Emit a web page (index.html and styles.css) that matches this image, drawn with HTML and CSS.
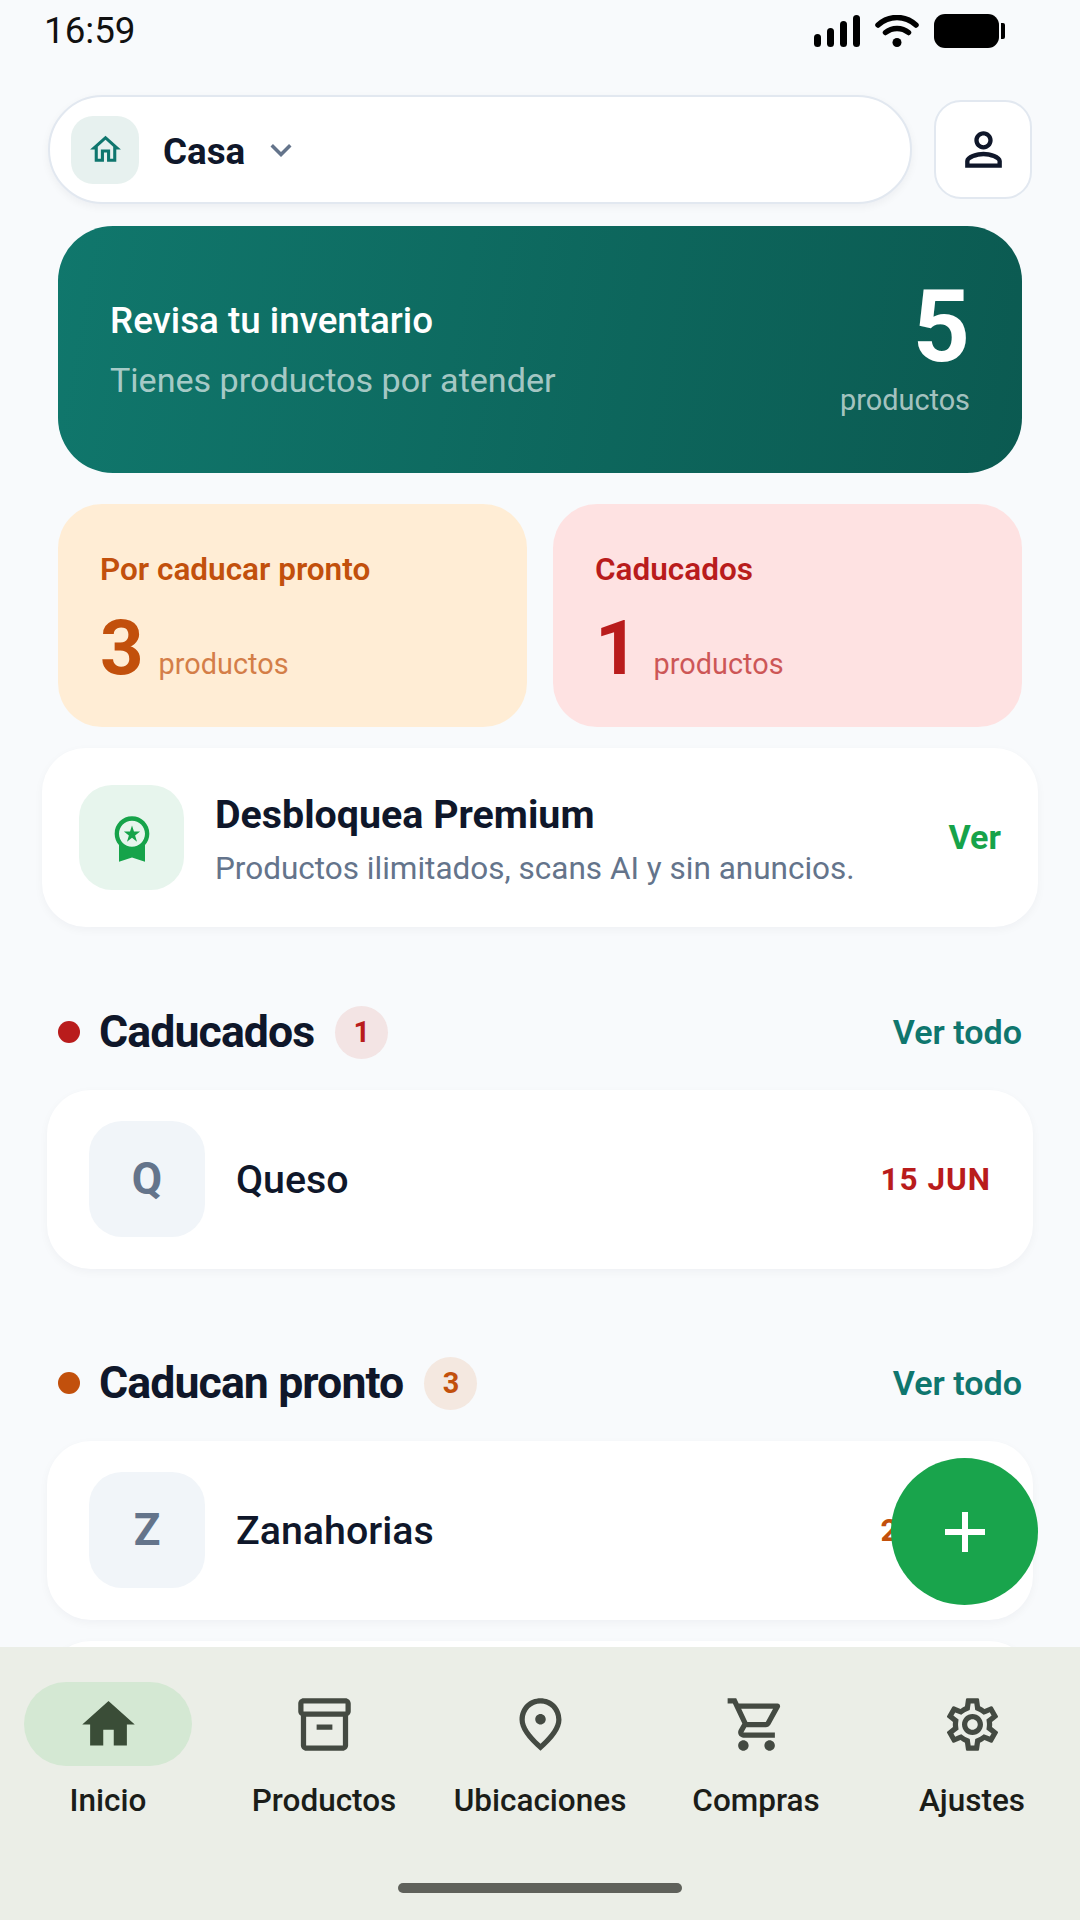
FILE: index.html
```html
<!DOCTYPE html>
<html lang="es">
<head>
<meta charset="UTF-8">
<meta name="viewport" content="width=device-width, initial-scale=1.0">
<title>Inicio</title>
<link rel="stylesheet" href="styles.css">
</head>
<body>
<div class="screen">
    <main class="content">
        <div class="status-bar">
            <span class="clock">16:59</span>
            <div class="status-icons">
                <svg class="signal" width="46" height="32" viewBox="0 0 46 32"><rect x="0" y="19" width="7" height="13" rx="3.5"/><rect x="13" y="13" width="7" height="19" rx="3.5"/><rect x="26" y="6" width="7" height="26" rx="3.5"/><rect x="39" y="0" width="7" height="32" rx="3.5"/></svg>
                <svg class="wifi" width="44" height="32" viewBox="0 0 44 32" fill="none" stroke="#000" stroke-width="5.5" stroke-linecap="round"><path d="M3 10C14 0 30 0 41 10"/><path d="M10.500 17.500C17 12 27 12 33.500 17.500"/><circle cx="22" cy="27.500" r="4.500" fill="#000" stroke="none"/></svg>
                <div class="battery"></div>
                <div class="battery-tip"></div>
            </div>
        </div>

        <div class="top-row">
            <div class="home-select">
                <div class="home-select-icon">
                    <svg width="37" height="37" viewBox="0 0 24 24" fill="#0f766e"><path d="M12 5.690l5 4.500V18h-2v-6H9v6H7v-7.810l5-4.500M12 3L2 12h3v8h6v-6h2v6h6v-8h3L12 3z"/></svg>
                </div>
                <span class="home-select-name">Casa</span>
                <svg class="chevron" width="42" height="42" viewBox="0 0 24 24" fill="#64748b"><path d="M16.590 8.590L12 13.170 7.410 8.590 6 10l6 6 6-6z"/></svg>
            </div>
            <div class="profile-btn">
                <svg width="55" height="55" viewBox="0 0 24 24" fill="#0f172a"><path d="M12 5.900c1.160 0 2.100.94 2.100 2.100s-.94 2.100-2.100 2.100S9.900 9.160 9.900 8s.94-2.100 2.100-2.100m0 9c2.970 0 6.100 1.460 6.100 2.100v1.100H5.900V17c0-.64 3.130-2.100 6.100-2.100M12 4C9.790 4 8 5.790 8 8s1.790 4 4 4 4-1.790 4-4-1.790-4-4-4zm0 9c-2.670 0-8 1.340-8 4v3h16v-3c0-2.660-5.330-4-8-4z"/></svg>
            </div>
        </div>

        <div class="hero">
            <div>
                <div class="hero-title">Revisa tu inventario</div>
                <div class="hero-sub">Tienes productos por atender</div>
            </div>
            <div class="hero-count">
                <div class="hero-number">5</div>
                <div class="hero-unit">productos</div>
            </div>
        </div>

        <div class="stats">
            <div class="stat stat-soon">
                <div class="stat-title">Por caducar pronto</div>
                <div class="stat-value"><span class="stat-number">3</span><span class="stat-unit">productos</span></div>
            </div>
            <div class="stat stat-expired">
                <div class="stat-title">Caducados</div>
                <div class="stat-value"><span class="stat-number">1</span><span class="stat-unit">productos</span></div>
            </div>
        </div>

        <div class="premium">
            <div class="premium-icon">
                <svg width="52" height="52" viewBox="0 0 24 24" fill="#16a34a"><path d="M9.680 13.690L12 11.930l2.310 1.760-.88-2.850L15.750 9h-2.840L12 6.190 11.090 9H8.250l2.310 1.840-.88 2.850zM20 10c0-4.420-3.580-8-8-8s-8 3.580-8 8c0 2.030.76 3.870 2 5.280V23l6-2 6 2v-7.720c1.240-1.410 2-3.250 2-5.280zm-8-6c3.310 0 6 2.690 6 6s-2.690 6-6 6-6-2.690-6-6 2.690-6 6-6z"/></svg>
            </div>
            <div class="premium-text">
                <div class="premium-title">Desbloquea Premium</div>
                <div class="premium-sub">Productos ilimitados, scans AI y sin anuncios.</div>
            </div>
            <span class="premium-link">Ver</span>
        </div>

        <div class="section-head section-expired">
            <span class="dot"></span>
            <h2>Caducados</h2>
            <span class="badge">1</span>
            <span class="see-all">Ver todo</span>
        </div>
        <div class="item">
            <div class="item-avatar">Q</div>
            <span class="item-name">Queso</span>
            <span class="item-date date-expired">15 JUN</span>
        </div>

        <div class="section-head section-soon">
            <span class="dot"></span>
            <h2>Caducan pronto</h2>
            <span class="badge">3</span>
            <span class="see-all">Ver todo</span>
        </div>
        <div class="item">
            <div class="item-avatar">Z</div>
            <span class="item-name">Zanahorias</span>
            <span class="item-date date-soon">20 JUN</span>
        </div>
        <div class="item item-next"></div>
    </main>

    <div class="fab">
        <svg width="40" height="40" viewBox="0 0 40 40" stroke="#fff" stroke-width="6"><path d="M20 0v40M0 20h40"/></svg>
    </div>

    <nav class="bottom-nav">
        <div class="tabs">
            <div class="tab active">
                <div class="tab-icon">
                    <svg width="63" height="63" viewBox="0 0 24 24"><path d="M10 20v-6h4v6h5v-8h3L12 3 2 12h3v8z"/></svg>
                </div>
                <span>Inicio</span>
            </div>
            <div class="tab">
                <div class="tab-icon">
                    <svg width="63" height="63" viewBox="0 0 24 24"><path d="M20 2H4c-1 0-2 .9-2 2v3.010c0 .72.43 1.340 1 1.690V20c0 1.100 1.100 2 2 2h14c.9 0 2-.9 2-2V8.700c.57-.35 1-.97 1-1.690V4c0-1.100-1-2-2-2zm-1 18H5V9h14v11zm1-13H4V4h16v3z"/><path d="M9 12h6v2H9z"/></svg>
                </div>
                <span>Productos</span>
            </div>
            <div class="tab">
                <div class="tab-icon">
                    <svg width="63" height="63" viewBox="0 0 24 24"><path d="M12 12c-1.100 0-2-.9-2-2s.9-2 2-2 2 .9 2 2-.9 2-2 2zm6-1.800C18 6.570 15.350 4 12 4s-6 2.570-6 6.200c0 2.340 1.950 5.440 6 9.140 4.050-3.700 6-6.800 6-9.140zM12 2c4.200 0 8 3.220 8 8.200 0 3.320-2.670 7.250-8 11.800-5.330-4.550-8-8.480-8-11.800C4 5.220 7.800 2 12 2z"/></svg>
                </div>
                <span>Ubicaciones</span>
            </div>
            <div class="tab">
                <div class="tab-icon">
                    <svg width="63" height="63" viewBox="0 0 24 24"><path d="M15.550 13c.75 0 1.410-.41 1.750-1.030l3.580-6.490c.37-.66-.11-1.480-.87-1.480H5.210l-.94-2H1v2h2l3.600 7.590-1.350 2.440C4.520 15.370 5.480 17 7 17h12v-2H7l1.100-2h7.450zM6.160 6h12.150l-2.760 5H8.530L6.160 6zM7 18c-1.100 0-1.990.9-1.990 2S5.900 22 7 22s2-.9 2-2-.9-2-2-2zm10 0c-1.100 0-1.990.9-1.990 2s.89 2 1.990 2 2-.9 2-2-.9-2-2-2z"/></svg>
                </div>
                <span>Compras</span>
            </div>
            <div class="tab">
                <div class="tab-icon">
                    <svg width="63" height="63" viewBox="0 0 24 24"><path d="M19.430 12.980c.04-.32.07-.64.07-.98 0-.34-.03-.66-.07-.98l2.110-1.650c.19-.15.24-.42.12-.64l-2-3.460c-.09-.16-.26-.25-.44-.25-.06 0-.12.01-.17.03l-2.490 1c-.52-.4-1.080-.73-1.690-.98l-.38-2.650C14.460 2.180 14.250 2 14 2h-4c-.25 0-.46.18-.49.42l-.38 2.650c-.61.25-1.170.59-1.690.98l-2.490-1c-.06-.02-.12-.03-.18-.03-.17 0-.34.09-.43.25l-2 3.460c-.13.22-.07.49.12.64l2.110 1.650c-.04.32-.07.65-.07.98 0 .33.03.66.07.98l-2.110 1.650c-.19.15-.24.42-.12.64l2 3.460c.09.16.26.25.44.25.06 0 .12-.01.17-.03l2.490-1c.52.4 1.080.73 1.690.98l.38 2.650c.03.24.24.42.49.42h4c.25 0 .46-.18.49-.42l.38-2.650c.61-.25 1.170-.59 1.690-.98l2.490 1c.06.02.12.03.18.03.17 0 .34-.09.43-.25l2-3.460c.12-.22.07-.49-.12-.64l-2.110-1.650zm-1.980-1.710c.04.31.05.52.05.73 0 .21-.02.43-.05.73l-.14 1.130.89.7 1.080.84-.7 1.210-1.270-.51-1.040-.42-.9.68c-.43.32-.84.56-1.250.73l-1.060.43-.16 1.130-.2 1.350h-1.400l-.19-1.350-.16-1.130-1.060-.43c-.43-.18-.83-.41-1.230-.71l-.91-.7-1.060.43-1.270.51-.7-1.210 1.080-.84.89-.7-.14-1.130c-.03-.31-.05-.54-.05-.74s.02-.43.05-.73l.14-1.130-.89-.7-1.080-.84.7-1.210 1.270.51 1.040.42.9-.68c.43-.32.84-.56 1.250-.73l1.060-.43.16-1.130.2-1.350h1.390l.19 1.350.16 1.130 1.060.43c.43.18.83.41 1.230.71l.91.7 1.060-.43 1.270-.51.7 1.210-1.070.85-.89.7.14 1.130zM12 8c-2.210 0-4 1.790-4 4s1.790 4 4 4 4-1.790 4-4-1.790-4-4-4zm0 6c-1.100 0-2-.9-2-2s.9-2 2-2 2 .9 2 2-.9 2-2 2z"/></svg>
                </div>
                <span>Ajustes</span>
            </div>
        </div>
        <div class="home-indicator"></div>
    </nav>
</div>
</body>
</html>
```

FILE: styles.css
```css
* {
    box-sizing: border-box;
}
body {
    font-family: Roboto, "Noto Sans", sans-serif;
    background-color: #f8fafc;
    color: #0f172a;
    margin: 0;
    padding: 0;
}
.screen {
    position: relative;
    width: 1080px;
    height: 1920px;
    display: flex;
    flex-direction: column;
    overflow: hidden;
}
.content {
    flex: 1;
    min-height: 0;
    overflow: hidden;
}

/* status bar */
.status-bar {
    height: 62px;
    padding: 15px 75px 0 44px;
    display: flex;
    justify-content: space-between;
    align-items: flex-start;
}
.clock {
    font-size: 36.75px;
    line-height: 32px;
    color: #111;
}
.status-icons {
    display: flex;
    align-items: center;
    height: 34px;
    margin-top: -1px;
}
.signal {
    margin-right: 15px;
}
.wifi {
    margin-right: 15px;
}
.battery {
    width: 65px;
    height: 34px;
    background-color: #000;
    border-radius: 11px;
}
.battery-tip {
    width: 4px;
    height: 16px;
    margin-left: 2px;
    background-color: #000;
    border-radius: 0 2px 2px 0;
}

/* top row */
.top-row {
    display: flex;
    align-items: center;
    gap: 22px;
    margin: 33px 48px 0;
}
.home-select {
    flex: 1;
    height: 109px;
    display: flex;
    align-items: center;
    padding-left: 21px;
    background-color: #fff;
    border: 2px solid #e2e8f0;
    border-radius: 55px;
    box-shadow: 0 3px 8px rgba(15, 23, 42, 0.05);
}
.home-select-icon {
    width: 68px;
    height: 68px;
    display: flex;
    align-items: center;
    justify-content: center;
    background-color: #e7f1ef;
    border-radius: 22px;
}
.home-select-name {
    margin-left: 24px;
    padding-top: 3px;
    font-size: 36.75px;
    font-weight: 700;
}
.chevron {
    margin-left: 15px;
}
.profile-btn {
    width: 98px;
    height: 99px;
    display: flex;
    align-items: center;
    justify-content: center;
    background-color: #fff;
    border: 2px solid #e2e8f0;
    border-radius: 27px;
}

/* hero */
.hero {
    height: 247px;
    margin: 22px 58px 0;
    padding: 0 52px;
    display: flex;
    align-items: center;
    justify-content: space-between;
    background: linear-gradient(100deg, #10776c, #0b5a51);
    border-radius: 55px;
    color: #fff;
}
.hero-title {
    font-size: 36.75px;
    font-weight: 500;
}
.hero-sub {
    margin-top: 18px;
    font-size: 34.1px;
    color: rgba(255, 255, 255, 0.65);
}
.hero-count {
    text-align: right;
}
.hero-number {
    font-size: 99.75px;
    font-weight: 700;
    line-height: 88px;
}
.hero-unit {
    margin-top: 12px;
    font-size: 28.875px;
    color: rgba(255, 255, 255, 0.65);
}

/* stats */
.stats {
    display: grid;
    grid-template-columns: 1fr 1fr;
    gap: 26px;
    margin: 31px 58px 0;
}
.stat {
    height: 223px;
    padding: 47px 42px 0;
    border-radius: 44px;
}
.stat-title {
    font-size: 31.5px;
    font-weight: 600;
}
.stat-value {
    display: flex;
    align-items: baseline;
    gap: 15px;
    margin-top: 14px;
}
.stat-number {
    font-size: 76px;
    font-weight: 700;
    line-height: 92px;
}
.stat-unit {
    font-size: 28.875px;
    opacity: 0.7;
}
.stat-soon {
    background-color: #ffedd5;
    color: #c2500c;
}
.stat-expired {
    background-color: #fee2e2;
    color: #b91c1c;
}

/* premium */
.premium {
    height: 179px;
    margin: 21px 42px 0;
    padding: 0 37px;
    display: flex;
    align-items: center;
    background-color: #fff;
    border-radius: 44px;
    box-shadow: 0 3px 10px rgba(15, 23, 42, 0.04);
}
.premium-icon {
    width: 105px;
    height: 105px;
    display: flex;
    align-items: center;
    justify-content: center;
    background-color: #e7f5ed;
    border-radius: 33px;
}
.premium-text {
    flex: 1;
    margin-left: 31px;
    padding-top: 2px;
}
.premium-title {
    font-size: 39.375px;
    font-weight: 700;
}
.premium-sub {
    margin-top: 12px;
    font-size: 31.5px;
    color: #64748b;
}
.premium-link {
    margin-top: -2px;
    font-size: 34.1px;
    font-weight: 700;
    color: #16a34a;
}

/* sections */
.section-head {
    display: flex;
    align-items: center;
    height: 52px;
    margin: 79px 58px 0;
}
.item + .section-head {
    margin-top: 88.5px;
}
.dot {
    width: 22px;
    height: 22px;
    border-radius: 50%;
}
.section-head h2 {
    margin: 0 0 0 19px;
    font-size: 44.625px;
    font-weight: 700;
    letter-spacing: -0.9px;
}
.badge {
    width: 53px;
    height: 53px;
    margin-left: 21px;
    display: flex;
    align-items: center;
    justify-content: center;
    border-radius: 50%;
    font-size: 28.875px;
    font-weight: 700;
}
.section-expired .dot {
    background-color: #b91c1c;
}
.section-expired .badge {
    background-color: #f3e4e4;
    color: #b91c1c;
}
.section-soon .dot {
    background-color: #c2500c;
}
.section-soon .badge {
    background-color: #f4e8e0;
    color: #c2500c;
}
.see-all {
    margin-left: auto;
    margin-top: -1px;
    font-size: 34.1px;
    font-weight: 600;
    color: #0f766e;
}

/* list items */
.item {
    height: 178.5px;
    margin: 32px 47px 0;
    padding: 0 42px;
    display: flex;
    align-items: center;
    background-color: #fff;
    border-radius: 44px;
    box-shadow: 0 3px 10px rgba(15, 23, 42, 0.04);
}
.item-next {
    margin-top: 21px;
}
.item-avatar {
    width: 116px;
    height: 116px;
    display: flex;
    align-items: center;
    justify-content: center;
    background-color: #f1f5f9;
    border-radius: 33px;
    font-size: 44px;
    font-weight: 700;
    color: #64748b;
}
.item-name {
    flex: 1;
    margin-left: 31px;
    font-size: 39.375px;
    font-weight: 500;
}
.item-date {
    font-size: 31.5px;
    font-weight: 700;
    letter-spacing: 1px;
}
.date-expired {
    color: #b91c1c;
}
.date-soon {
    color: #c2500c;
}

/* fab */
.fab {
    position: absolute;
    left: 891px;
    top: 1458px;
    width: 147px;
    height: 147px;
    display: flex;
    align-items: center;
    justify-content: center;
    background-color: #19a44c;
    border-radius: 50%;
}

/* bottom nav */
.bottom-nav {
    height: 273px;
    padding-top: 35px;
    background-color: #ebeee7;
}
.tabs {
    display: grid;
    grid-template-columns: repeat(5, 216px);
}
.tab {
    display: flex;
    flex-direction: column;
    align-items: center;
    font-size: 31.5px;
    font-weight: 500;
    line-height: 37px;
    color: #1b1d19;
}
.tab-icon {
    width: 168px;
    height: 84px;
    margin-bottom: 16px;
    display: flex;
    align-items: center;
    justify-content: center;
    border-radius: 42px;
    fill: #444a42;
}
.tab.active .tab-icon {
    background-color: #d4e8d3;
    fill: #3a4d37;
}
.home-indicator {
    width: 284px;
    height: 10px;
    margin: 64px auto 0;
    background-color: #5f615b;
    border-radius: 5px;
}
```
